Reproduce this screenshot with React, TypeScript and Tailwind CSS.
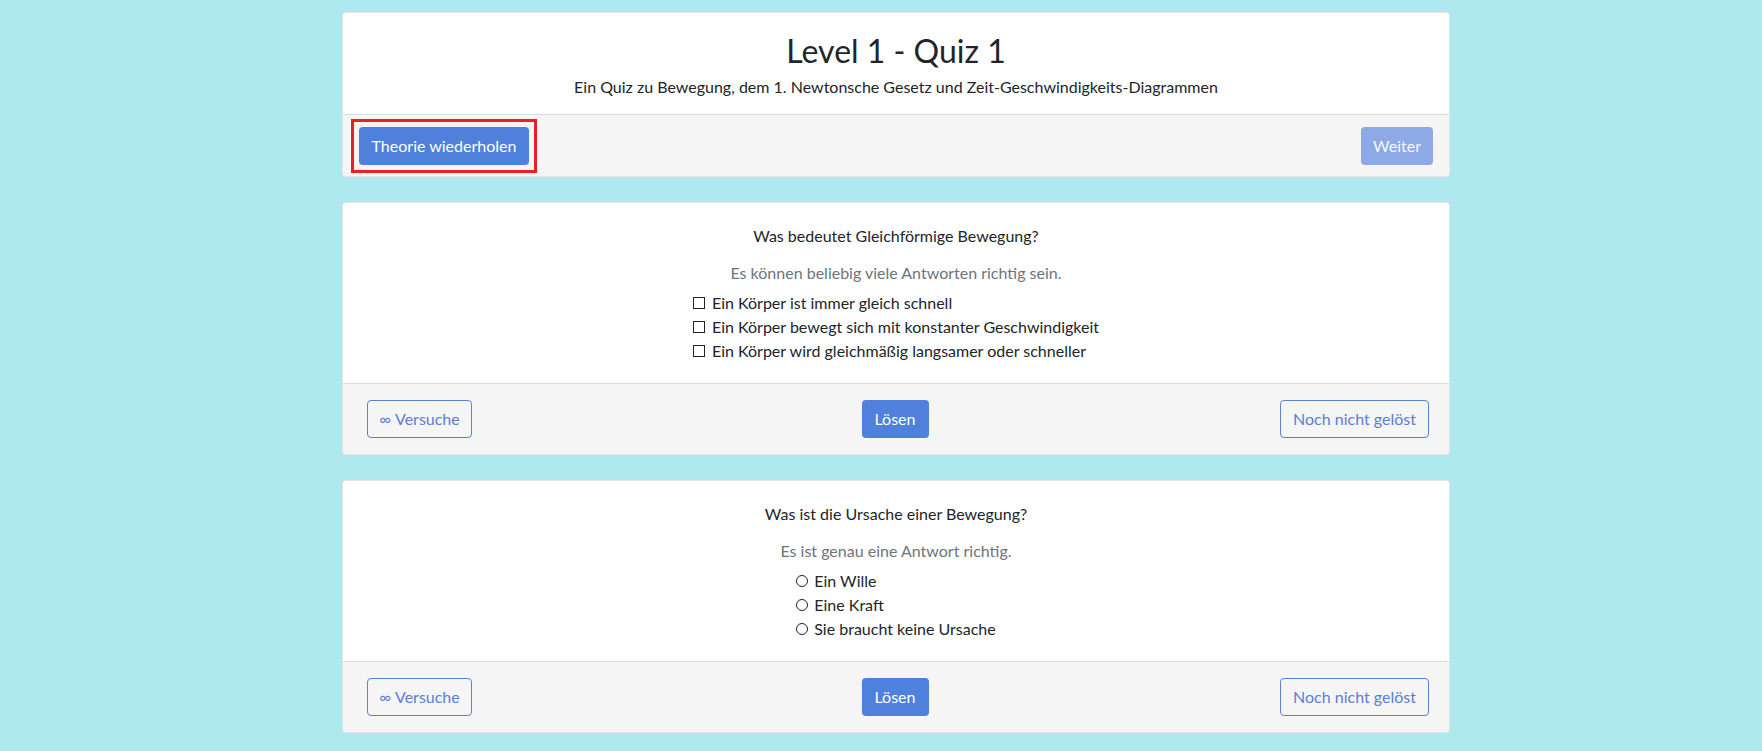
import React from "react";

const questions = [
  {
    title: "Was bedeutet Gleichförmige Bewegung?",
    hint: "Es können beliebig viele Antworten richtig sein.",
    kind: "check",
    answers: [
      "Ein Körper ist immer gleich schnell",
      "Ein Körper bewegt sich mit konstanter Geschwindigkeit",
      "Ein Körper wird gleichmäßig langsamer oder schneller",
    ],
  },
  {
    title: "Was ist die Ursache einer Bewegung?",
    hint: "Es ist genau eine Antwort richtig.",
    kind: "radio",
    answers: ["Ein Wille", "Eine Kraft", "Sie braucht keine Ursache"],
  },
];

function QuizCard({ q }: { q: (typeof questions)[number] }) {
  return (
    <div className="bg-white rounded border border-black/10 overflow-hidden">
      <div className="px-5 pt-[21px] pb-5 flex flex-col items-center text-center">
        <p className="leading-6 mb-[13px]">{q.title}</p>
        <p className="leading-6 text-[#6c757d] mb-[6px]">{q.hint}</p>
        <ul className="text-left">
          {q.answers.map((a) => (
            <li key={a} className="flex items-center leading-6">
              {q.kind === "check" ? (
                <span className="w-[12px] h-[12px] border border-[#222] mr-[7px] shrink-0" />
              ) : (
                <span className="w-[12px] h-[12px] border border-[#222] rounded-full mr-[6px] shrink-0" />
              )}
              <span>{a}</span>
            </li>
          ))}
        </ul>
      </div>
      <div className="bg-[#f5f5f5] border-t border-[#dcdcdc] pl-6 pr-5 py-4 grid grid-cols-3 items-center">
        <button className="justify-self-start h-[38px] w-[105px] rounded border border-[#5b80d8] text-[#5b7fd4] bg-transparent">
          <span className="mr-1">∞</span>Versuche
        </button>
        <button className="justify-self-center h-[38px] w-[67px] rounded bg-[#4f80dc] text-white mr-[6px]">Lösen</button>
        <button className="justify-self-end h-[38px] w-[149px] rounded border border-[#5b80d8] text-[#5b7fd4] bg-transparent">
          Noch nicht gelöst
        </button>
      </div>
    </div>
  );
}

export default function App() {
  return (
    <div
      className="min-h-screen bg-[#aee9f0] text-[#212529] text-[16px]"
      style={{ fontFamily: '"Lato", "Noto Sans", sans-serif' }}
    >
      <div className="ml-[342px] w-[1108px] pt-3 pb-5 flex flex-col gap-[25px]">
        <div className="bg-white rounded border border-black/10 overflow-hidden">
          <div className="pt-[19px] pb-[15px] flex flex-col items-center">
            <h1 className="text-[32px] leading-[38px] font-normal mb-[5px]">Level 1 - Quiz 1</h1>
            <p className="leading-6">
              Ein Quiz zu Bewegung, dem 1. Newtonsche Gesetz und Zeit-Geschwindigkeits-Diagrammen
            </p>
          </div>
          <div className="bg-[#f5f5f5] border-t border-[#dcdcdc] px-4 pt-3 pb-[11px] flex items-center justify-between">
            <div className="outline-[3px] outline-solid outline-[#ee1c24] outline-offset-[5px]">
              <button className="h-[38px] w-[170px] rounded bg-[#4f80dc] text-white">Theorie wiederholen</button>
            </div>
            <button className="h-[38px] w-[72px] rounded bg-[#8eaae6] text-white/95 cursor-default">Weiter</button>
          </div>
        </div>
        {questions.map((q) => (
          <QuizCard key={q.title} q={q} />
        ))}
      </div>
    </div>
  );
}
